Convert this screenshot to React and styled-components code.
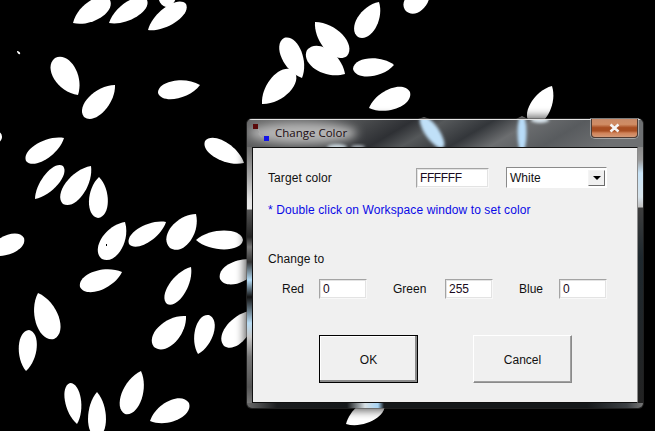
import React from "react";
import styled, { createGlobalStyle } from "styled-components";

const GlobalStyle = createGlobalStyle`
  html, body {
    margin: 0;
    padding: 0;
    background: #000;
  }
`;

// tip x, tip y, round end x, round end y, width
const petals = [
  [73, 23, 110, 0, 21],
  [109, 23, 147, 0, 19],
  [148, 30, 186, 4, 19],
  [170, -30, 166, 7, 20],
  [17, 51, 20, 54, 2],
  [78, 95, 55, 58, 25],
  [115, 85, 84, 117, 22],
  [200, 85, 158, 93, 19],
  [-12, 137, 2, 137, 12],
  [64, 138, 26, 161, 19],
  [35, 199, 63, 166, 17],
  [91, 166, 63, 204, 22],
  [99, 177, 98, 218, 20],
  [244, 163, 205, 141, 20],
  [-14, 254, 24, 238, 20],
  [125, 222, 102, 259, 24],
  [166, 222, 129, 244, 18],
  [196, 214, 170, 248, 25],
  [196, 240, 243, 240, 20],
  [122, 272, 80, 287, 21],
  [191, 267, 167, 304, 19],
  [262, 262, 220, 279, 23],
  [38, 293, 54, 339, 25],
  [26, 371, 29, 330, 19],
  [186, 316, 154, 347, 24],
  [198, 354, 209, 315, 20],
  [255, 310, 224, 346, 24],
  [141, 371, 125, 414, 22],
  [150, 421, 189, 403, 22],
  [77, 424, 70, 383, 17],
  [97, 392, 97, 437, 19],
  [262, 104, 294, 71, 24],
  [302, 78, 284, 38, 22],
  [345, 74, 307, 50, 25],
  [315, 22, 347, 56, 24],
  [379, 2, 358, 37, 22],
  [430, -8, 405, 10, 21],
  [394, 65, 353, 69, 19],
  [369, 108, 410, 92, 22],
  [552, 86, 531, 124, 22],
  [346, 424, 384, 402, 22],
];

function petalPath([tx, ty, ex, ey, w]) {
  const dx = ex - tx;
  const dy = ey - ty;
  const len = Math.hypot(dx, dy);
  const nx = (-dy / len) * w * 0.63;
  const ny = (dx / len) * w * 0.63;
  const ax = tx + dx * 0.3;
  const ay = ty + dy * 0.3;
  const bx = ex - dx * 0.04;
  const by = ey - dy * 0.04;
  return (
    `M${tx} ${ty}C${ax + nx} ${ay + ny} ${bx + nx} ${by + ny} ${ex} ${ey}` +
    `C${bx - nx} ${by - ny} ${ax - nx} ${ay - ny} ${tx} ${ty}Z`
  );
}

const Desktop = styled.div`
  position: relative;
  width: 655px;
  height: 431px;
  overflow: hidden;
  background: #000;
`;

const Workspace = styled.svg`
  position: absolute;
  inset: 0;
  display: block;
`;

const Dialog = styled.div`
  position: absolute;
  left: 247px;
  top: 119px;
  width: 396px;
  height: 289px;
  box-sizing: border-box;
  display: flex;
  flex-direction: column;
  padding: 0 5px 5px;
  border-radius: 5px;
  box-shadow: 0 0 9px 3px rgba(0, 0, 0, 0.6), 0 0 0 1px rgba(120, 120, 120, 0.45);
  font-family: "Liberation Sans", Arial, sans-serif;
  background:
    linear-gradient(90deg, #6a6a6a, #1a1c1e 30px, #15181a 100px, #d8e0e4 118px, #a8d4f4 131px, #15181a 137px, #15181a 340px, #3c4044 380px, #777) bottom / 100% 5px no-repeat,
    linear-gradient(#6e6e6e, #a8a8a8 30px, #e4e4e4 53px, #e8e8e8 62px, #555 63px, #222 90px, #777 100px, #333 115px, #b4dcf6 133px, #111 150px, #b8dcf4 176px, #c8c8c8 190px, #777 210px, #555 240px, #777 256px) left 28px / 5px 256px no-repeat,
    linear-gradient(#8a8a8a, #9a9a9a 13px, #c8e4f8 26px, #d8e4ec 50px, #c0c0c0 60px, #3e3e3e 61px, #1e282e 110px, #222 256px) right 28px / 5px 256px no-repeat,
    #555;
`;

const TitleGlass = styled.svg`
  position: absolute;
  left: 0;
  top: 0;
  display: block;
  border-radius: 5px 5px 0 0;
`;

const TitleBar = styled.div`
  position: relative;
  display: flex;
  align-items: flex-start;
  height: 28px;
  flex: none;
`;

const AppIcon = styled.svg`
  display: block;
  margin: 5px 0 0 1px;
  flex: none;
`;

const TitleText = styled.span`
  margin: 6px 0 0 5px;
  font-family: "Open Sans", "Noto Sans", sans-serif;
  font-size: 11.5px;
  line-height: 15px;
  color: #1c0c10;
`;

const CloseButton = styled.div`
  margin-left: auto;
  width: 47px;
  height: 19px;
  box-sizing: border-box;
  display: flex;
  align-items: center;
  justify-content: center;
  border: 1px solid #4d3a32;
  border-top: none;
  border-radius: 0 0 4px 4px;
  box-shadow: 0 0 0 1px rgba(220, 220, 220, 0.5);
  background: linear-gradient(#c98a68, #d08c64 30%, #a84e22 48%, #a84e22 66%, #d08258 78%, #d49a78);
`;

const Client = styled.div`
  position: relative;
  flex: 1;
  box-sizing: border-box;
  border: 1px solid;
  border-color: #111 #8c8c8c #111 #111;
  background: #f0f0f0;
  padding: 19px 30px 0 15px;
  font-size: 12px;
  color: #111;
`;

const TargetRow = styled.div`
  display: flex;
  align-items: center;
  height: 21px;
`;

const Label = styled.span`
  width: 148px;
  flex: none;
  letter-spacing: 0.1px;
`;

const TextBox = styled.div`
  width: ${(p) => p.$width}px;
  height: 20px;
  flex: none;
  box-sizing: border-box;
  padding-left: 3px;
  line-height: 18px;
  background: #fff;
  border: 1px solid;
  border-color: #a4a4a4 #f8f8f8 #f8f8f8 #a4a4a4;
  outline: 1px solid #e3e3e3;
  outline-offset: -2px;
  color: #1a0a20;
  letter-spacing: ${(p) => (p.$tight ? "-0.4px" : "0")};
`;

const Combo = styled.div`
  display: flex;
  align-items: center;
  justify-content: space-between;
  width: 101px;
  height: 21px;
  margin-left: 17px;
  flex: none;
  box-sizing: border-box;
  padding: 0 1px 0 3px;
  background: #fff;
  border: 1px solid;
  border-color: #8a8a8a #fff #fff #8a8a8a;
`;

const ComboArrow = styled.div`
  width: 17px;
  height: 16px;
  display: flex;
  align-items: center;
  justify-content: center;
  background: #f0f0f0;
  border: 1px solid;
  border-color: #f4f4f4 #6c6c6c #6c6c6c #f4f4f4;
  box-sizing: border-box;

  &::after {
    content: "";
    border: 4px solid transparent;
    border-top: 4px solid #000;
    border-bottom: none;
  }
`;

const Hint = styled.div`
  margin-top: 15px;
  line-height: 14px;
  color: #0a0ae6;
  letter-spacing: 0.1px;
`;

const SectionLabel = styled.div`
  margin-top: 35px;
  line-height: 14px;
  letter-spacing: 0.1px;
`;

const ChannelRow = styled.div`
  display: grid;
  grid-template-columns: 37px 48px 78px 48px 66px 48px;
  align-items: center;
  height: 20px;
  margin: 13px 0 0 14px;
`;

const ChannelLabel = styled.span`
  padding-left: ${(p) => p.$indent || 0}px;
`;

const ButtonRow = styled.div`
  display: flex;
  gap: 55px;
  margin: 36px 0 0 51px;
`;

const DialogButton = styled.div`
  width: 99px;
  height: 48px;
  box-sizing: border-box;
  display: flex;
  align-items: center;
  justify-content: center;
  padding-top: 2px;
  background: #f0f0f0;
  border: 1px solid;
  border-color: ${(p) => (p.$primary ? "#000" : "#fff #8a8a8a #8a8a8a #fff")};
  box-shadow: ${(p) =>
    p.$primary
      ? "inset -2px -2px 0 #8a8a8a, inset 1px 1px 0 #fff"
      : "inset -1px -1px 0 #a0a0a0"};
`;

// aero glass reflection of the workspace behind the title bar
function Glass() {
  return (
    <TitleGlass width="396" height="28" viewBox="0 0 396 28">
      <defs>
        <linearGradient id="glassBase" x1="0" y1="0" x2="1" y2="0.12">
          <stop offset="0" stopColor="#6a6a6a" />
          <stop offset="0.3" stopColor="#4a4c4e" />
          <stop offset="0.42" stopColor="#2e3034" />
          <stop offset="0.5" stopColor="#55585a" />
          <stop offset="0.62" stopColor="#33363a" />
          <stop offset="0.72" stopColor="#6c6e70" />
          <stop offset="0.85" stopColor="#585b5e" />
          <stop offset="1" stopColor="#6e7072" />
        </linearGradient>
        <filter id="soft" x="-50%" y="-50%" width="200%" height="200%">
          <feGaussianBlur stdDeviation="1.6" />
        </filter>
        <filter id="wide" x="-50%" y="-50%" width="200%" height="200%">
          <feGaussianBlur stdDeviation="5" />
        </filter>
      </defs>
      <rect width="396" height="28" fill="url(#glassBase)" />
      <ellipse cx="56" cy="14" rx="54" ry="11" fill="#b4b4b4" filter="url(#wide)" />
      <ellipse cx="185" cy="13" rx="7" ry="19" fill="#c0e0f8" filter="url(#soft)" transform="rotate(-35 185 13)" />
      <ellipse cx="275" cy="14" rx="4.5" ry="19" fill="#b8dcf8" filter="url(#soft)" />
      <ellipse cx="90" cy="28" rx="10" ry="3" fill="#c8d4dc" filter="url(#soft)" />
      <ellipse cx="111" cy="28" rx="7" ry="2" fill="#a8b0b8" filter="url(#soft)" />
      <ellipse cx="293" cy="1" rx="9" ry="3" fill="#d8e4ec" filter="url(#soft)" />
      <rect width="396" height="1" fill="#e4e4e4" />
    </TitleGlass>
  );
}

export default function App() {
  return (
    <>
      <GlobalStyle />
      <Desktop>
        <Workspace width="655" height="431" viewBox="0 0 655 431">
          {petals.map((p, i) => (
            <path key={i} d={petalPath(p)} fill="#fff" />
          ))}
          <rect x="106" y="244" width="1" height="2" fill="#000" />
          <path d="M418 119l6-2 6 2zM516 119l6-3 6 3z" fill="#9a9a9a" />
        </Workspace>
        <Dialog>
          <Glass />
          <TitleBar>
            <AppIcon width="17" height="18" viewBox="0 0 17 18">
              <rect x="0" y="0" width="5" height="5" fill="#5a0a0a" />
              <path d="M5 5l2 3-1 2 3 3" fill="none" stroke="#aaa" strokeWidth="1.2" />
              <rect x="11" y="12" width="5" height="5" fill="#1414e6" />
            </AppIcon>
            <TitleText>Change Color</TitleText>
            <CloseButton>
              <svg width="13" height="10" viewBox="0 0 13 10">
                <path d="M2.5 1.5l8 7M10.5 1.5l-8 7" stroke="#f4f4f4" strokeWidth="2.6" fill="none" />
              </svg>
            </CloseButton>
          </TitleBar>
          <Client>
            <TargetRow>
              <Label>Target color</Label>
              <TextBox $width={73} $tight>FFFFFF</TextBox>
              <Combo>
                <span>White</span>
                <ComboArrow />
              </Combo>
            </TargetRow>
            <Hint>* Double click on Workspace window to set color</Hint>
            <SectionLabel>Change to</SectionLabel>
            <ChannelRow>
              <ChannelLabel>Red</ChannelLabel>
              <TextBox $width={48}>0</TextBox>
              <ChannelLabel $indent={26}>Green</ChannelLabel>
              <TextBox $width={48}>255</TextBox>
              <ChannelLabel $indent={26}>Blue</ChannelLabel>
              <TextBox $width={48}>0</TextBox>
            </ChannelRow>
            <ButtonRow>
              <DialogButton $primary>OK</DialogButton>
              <DialogButton>Cancel</DialogButton>
            </ButtonRow>
          </Client>
        </Dialog>
      </Desktop>
    </>
  );
}
